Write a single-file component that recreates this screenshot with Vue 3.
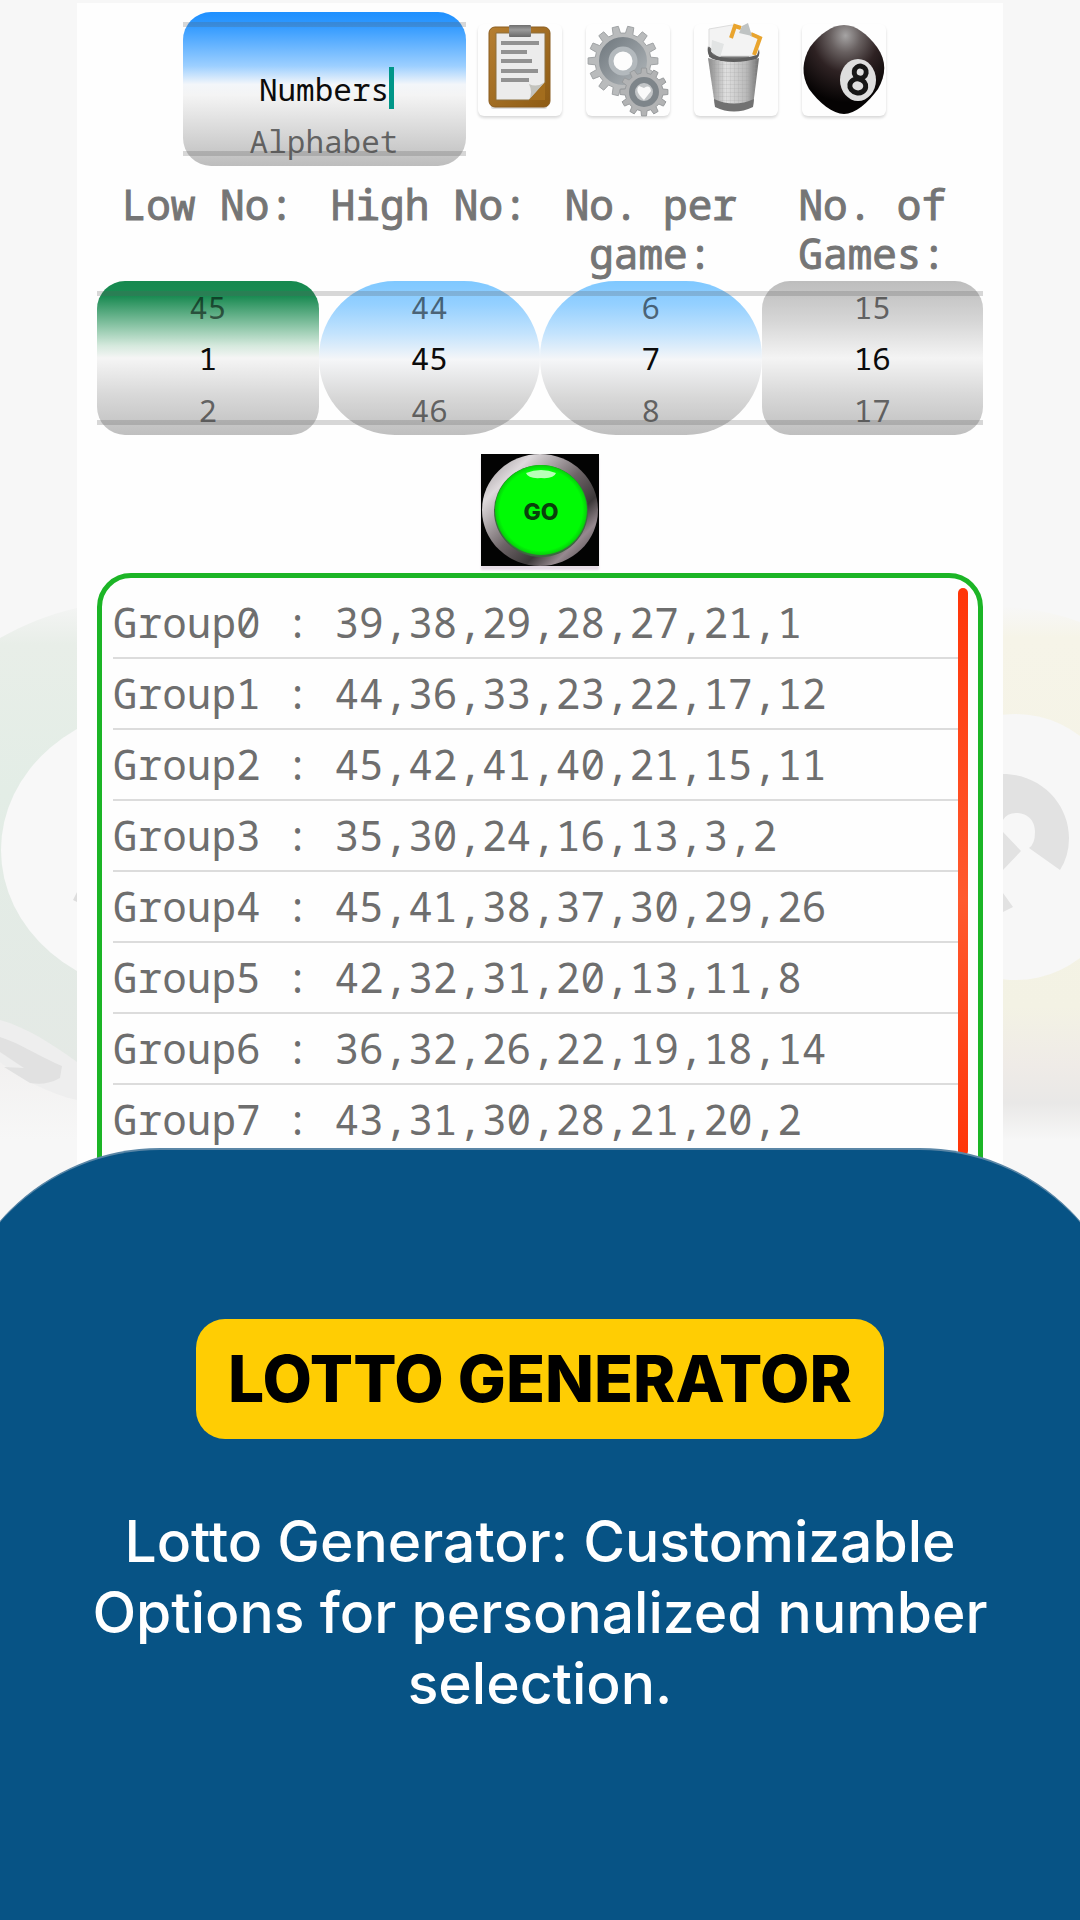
<script setup>
import { ref, computed } from 'vue';

const mode = ref('Numbers');

// One wheel per setting, with the values above and below the current one
const wheels = ref([
  { id: 'low', label: 'Low No:', value: 1, min: 1, max: 45, look: 'green' },
  { id: 'high', label: 'High No:', value: 45, min: 1, max: 99, look: 'blue' },
  { id: 'per-game', label: 'No. per game:', value: 7, min: 1, max: 20, look: 'blue' },
  { id: 'games', label: 'No. of Games:', value: 16, min: 1, max: 50, look: 'grey' },
]);

const previous = (wheel) => (wheel.value <= wheel.min ? wheel.max : wheel.value - 1);
const next = (wheel) => (wheel.value >= wheel.max ? wheel.min : Number(wheel.value) + 1);

const games = ref([
  [39, 38, 29, 28, 27, 21, 1],
  [44, 36, 33, 23, 22, 17, 12],
  [45, 42, 41, 40, 21, 15, 11],
  [35, 30, 24, 16, 13, 3, 2],
  [45, 41, 38, 37, 30, 29, 26],
  [42, 32, 31, 20, 13, 11, 8],
  [36, 32, 26, 22, 19, 18, 14],
  [43, 31, 30, 28, 21, 20, 2],
]);

const rows = computed(() => games.value.map((game, i) => `Group${i} : ${game.join(',')}`));

// Draw new games from the wheel settings
const generate = () => {
  const [low, high, perGame, count] = wheels.value.map((w) => Number(w.value));
  games.value = Array.from({ length: count }, () => {
    const pool = [];
    for (let n = low; n <= high; n++) pool.push(n);
    const picked = [];
    while (picked.length < perGame && pool.length) {
      picked.push(pool.splice(Math.floor(Math.random() * pool.length), 1)[0]);
    }
    return picked.sort((a, b) => b - a);
  });
};

const clearGames = () => {
  games.value = [];
};

// Gear outline: teeth around a circle
const gear = (cx, cy, outer, inner, teeth) => {
  const points = [];
  const step = (Math.PI * 2) / teeth;
  for (let i = 0; i < teeth; i++) {
    const a = i * step;
    [[-0.3, inner], [-0.2, outer], [0.2, outer], [0.3, inner]].forEach(([k, r]) => {
      points.push(`${(cx + Math.cos(a + k * step) * r).toFixed(1)},${(cy + Math.sin(a + k * step) * r).toFixed(1)}`);
    });
  }
  return points.join(' ');
};
</script>

<template>
  <div class="page">
    <svg class="ball left" viewBox="0 0 77 560" aria-hidden="true">
      <defs>
        <linearGradient id="greenBall" x1="0" y1="0" x2="0" y2="1">
          <stop offset="0" stop-color="#f3f4f3" />
          <stop offset="0.08" stop-color="#e8eee8" />
          <stop offset="0.4" stop-color="#e3ede6" />
          <stop offset="1" stop-color="#e4e9e5" />
        </linearGradient>
        <linearGradient id="floor" x1="0" y1="0" x2="0" y2="1">
          <stop offset="0" stop-color="#efedec" />
          <stop offset="1" stop-color="#f7f7f7" />
        </linearGradient>
      </defs>
      <path d="M0 440L77 480V560H0Z" fill="url(#floor)" />
      <path d="M0 58C25 44 50 34 77 28V488L0 444Z" fill="url(#greenBall)" />
      <ellipse cx="170" cy="270" rx="169" ry="145" fill="#f8f8f8" />
      <path d="M77 312L73 320L77 322Z" fill="#dddddd" />
      <path d="M0 440C28 448 52 464 77 482V520C50 514 22 500 0 482Z" fill="#eeeeee" />
      <path d="M0 457C22 464 42 478 62 486L60 498Q46 506 30 503L4 487L24 488L0 472Z" fill="#e1e1e1" />
    </svg>
    <svg class="ball right" viewBox="0 0 77 560" aria-hidden="true">
      <defs>
        <linearGradient id="yellowBall" x1="0" y1="0" x2="0" y2="1">
          <stop offset="0" stop-color="#f7f7f7" />
          <stop offset="0.06" stop-color="#f6f4e8" />
          <stop offset="0.75" stop-color="#f3f2e4" />
          <stop offset="0.86" stop-color="#efebe7" />
          <stop offset="0.93" stop-color="#e9e8e7" />
          <stop offset="1" stop-color="#f7f7f7" />
        </linearGradient>
      </defs>
      <path d="M0 26Q45 30 77 42V560H0Z" fill="url(#yellowBall)" />
      <ellipse cx="13" cy="267" rx="116" ry="133" fill="#f7f7f7" />
      <path d="M0 194C38 194 66 224 66 258Q66 276 57 290L26 268Q32 264 32 252C32 238 22 233 13 233Q4 233 0 240Z" fill="#e2e2e2" />
      <path d="M0 252L18 271L0 290ZM0 313L10 327L0 332Z" fill="#e2e2e2" />
    </svg>

    <main class="card">
      <header class="toolbar">
        <div class="wheel mode">
          <span></span>
          <input v-model="mode" type="text" aria-label="Mode">
          <i class="caret"></i>
          <button type="button" class="near" @click="mode = 'Alphabet'">Alphabet</button>
        </div>
        <div class="icons">
          <button type="button" class="icon" aria-label="Copy games">
            <svg viewBox="0 0 84 92">
              <defs>
                <linearGradient id="wood" x1="0" y1="0" x2="1" y2="1">
                  <stop offset="0" stop-color="#b67f31" />
                  <stop offset="1" stop-color="#8d5b14" />
                </linearGradient>
                <linearGradient id="clip" x1="0" y1="0" x2="0" y2="1">
                  <stop offset="0" stop-color="#6f6f6f" />
                  <stop offset="0.4" stop-color="#9b9b9b" />
                  <stop offset="1" stop-color="#6a6a6a" />
                </linearGradient>
              </defs>
              <rect x="13" y="80" width="56" height="5" rx="2" fill="#dedede" />
              <rect x="11" y="3" width="61" height="80" rx="6" fill="url(#wood)" stroke="#8a5c20" />
              <path d="M18 9H67V59L51 76H18Z" fill="#ececec" stroke="#8d713f" />
              <path d="M51 76Q55 68 51 60Q59 64 67 58Z" fill="#c3c3bd" />
              <path d="M67 58L51 76H67Z" fill="#a36d1d" />
              <rect x="31" y="1" width="22" height="12" rx="1" fill="url(#clip)" />
              <path d="M23 19H61M23 28H49M23 37H54M23 47H60M23 56H51" stroke="#929292" stroke-width="4" />
            </svg>
          </button>
          <button type="button" class="icon" aria-label="Settings">
            <svg viewBox="0 0 84 92">
              <defs>
                <linearGradient id="steel" x1="0" y1="0" x2="1" y2="1">
                  <stop offset="0" stop-color="#767e84" />
                  <stop offset="1" stop-color="#a9afb3" />
                </linearGradient>
              </defs>
              <polygon :points="gear(37, 37, 35, 28, 14)" fill="#b9bbbc" stroke="#a0a3a5" />
              <circle cx="37" cy="37" r="18" fill="none" stroke="url(#steel)" stroke-width="12" />
              <circle cx="37" cy="37" r="12" fill="#fdfdfd" stroke="#b3b9bd" stroke-width="5" />
              <polygon :points="gear(58, 68, 24, 19, 12)" fill="#b2b3b4" stroke="#989b9d" />
              <circle cx="58" cy="68" r="12" fill="#c3c6c8" stroke="#7e858a" stroke-width="6" />
              <path d="M58 76Q48 67 53 62L58 64Q64 60 65 67Z" fill="#fafafa" />
            </svg>
          </button>
          <button type="button" class="icon" aria-label="Delete games" @click="clearGames">
            <svg viewBox="0 0 84 92">
              <defs>
                <linearGradient id="bin" x1="0" y1="0" x2="1" y2="0">
                  <stop offset="0" stop-color="#898989" />
                  <stop offset="0.35" stop-color="#e0e0e0" />
                  <stop offset="0.75" stop-color="#bababa" />
                  <stop offset="1" stop-color="#6e6e6e" />
                </linearGradient>
                <pattern id="mesh" width="4" height="4" patternUnits="userSpaceOnUse">
                  <path d="M0 0H4M0 0V4" stroke="#999999" stroke-opacity="0.35" />
                </pattern>
              </defs>
              <path d="M15 23L53 25L56 35Q38 40 15 33Z" fill="#777777" />
              <path d="M15 5L38 1L65 12L61 32H25L15 22Z" fill="#f3f3f3" stroke="#dddddd" />
              <path d="M37 14L41 2L47 4" fill="none" stroke="#e9a42d" stroke-width="4" />
              <path d="M57 10L66 14L60 31" fill="none" stroke="#e9a42d" stroke-width="4" />
              <path d="M48 2L54 -1L58 12L45 9Z" fill="#bfc3c3" />
              <path d="M18 16L30 20L26 34L17 28Z" fill="#e2e4e4" />
              <path d="M14 22Q12 34 22 36Q40 41 60 36Q67 34 65 25L63 31Q40 38 19 31Z" fill="#5e5e5e" />
              <path d="M14 34Q40 42 65 34L59 82Q40 92 21 82Z" fill="url(#bin)" />
              <path d="M14 34Q40 42 65 34L59 79H20Z" fill="url(#mesh)" />
              <path d="M20 75Q40 84 60 75L59 83Q40 92 21 83Z" fill="#717171" />
            </svg>
          </button>
          <button type="button" class="icon" aria-label="Lucky draw">
            <svg viewBox="0 0 84 92">
              <defs>
                <radialGradient id="black" cx="0.52" cy="0.12" r="0.75">
                  <stop offset="0" stop-color="#a6a4a4" />
                  <stop offset="0.25" stop-color="#686060" />
                  <stop offset="0.55" stop-color="#2e2223" />
                  <stop offset="1" stop-color="#050303" />
                </radialGradient>
              </defs>
              <path d="M42 1C54 1 65 10 75 23C85 37 84 51 76 65C66 79 53 90 42 90C31 90 17 79 7 65C-1 51 0 37 8 23C18 10 30 1 42 1Z" fill="url(#black)" />
              <ellipse cx="56" cy="56" rx="18" ry="21" fill="#dedede" />
              <g fill="none" stroke="#161616" stroke-width="5" transform="rotate(10 57 55)">
                <ellipse cx="57" cy="48" rx="6" ry="6" />
                <ellipse cx="57" cy="62" rx="8" ry="7" />
              </g>
            </svg>
          </button>
        </div>
      </header>

      <div class="labels">
        <label v-for="wheel in wheels" :key="wheel.id" :for="wheel.id">{{ wheel.label }}</label>
      </div>
      <div class="wheels">
        <div v-for="wheel in wheels" :key="wheel.id" class="wheel" :class="wheel.look">
          <button type="button" class="near" @click="wheel.value = previous(wheel)">{{ previous(wheel) }}</button>
          <input :id="wheel.id" v-model="wheel.value" type="text" inputmode="numeric">
          <button type="button" class="near" @click="wheel.value = next(wheel)">{{ next(wheel) }}</button>
        </div>
      </div>

      <button type="button" class="go" aria-label="Go" @click="generate">
        <svg viewBox="0 0 118 112">
          <defs>
            <linearGradient id="chrome" x1="0" y1="0" x2="1" y2="1">
              <stop offset="0" stop-color="#8d8789" />
              <stop offset="0.22" stop-color="#ded9dc" />
              <stop offset="0.5" stop-color="#6d6467" />
              <stop offset="0.68" stop-color="#3c3839" />
              <stop offset="0.8" stop-color="#96898f" />
              <stop offset="1" stop-color="#2b2829" />
            </linearGradient>
            <radialGradient id="lamp">
              <stop offset="0.9" stop-color="#00fb05" />
              <stop offset="1" stop-color="#06cd0a" />
            </radialGradient>
          </defs>
          <rect width="118" height="112" fill="#030303" />
          <ellipse cx="59" cy="56" rx="58" ry="56" fill="url(#chrome)" />
          <ellipse cx="60" cy="57" rx="47" ry="46" fill="#3b6b3f" />
          <ellipse cx="60" cy="56" rx="46" ry="45" fill="url(#lamp)" />
          <path d="M45 19Q60 13 75 19Q73 25 60 24Q47 25 45 19Z" fill="#b7ffb8" />
          <text x="60" y="66" text-anchor="middle" class="go-text">GO</text>
        </svg>
      </button>

      <section class="results">
        <ul>
          <li v-for="row in rows" :key="row">{{ row }}</li>
        </ul>
        <div class="scrollbar"></div>
      </section>
    </main>

    <section class="promo">
      <h1>LOTTO GENERATOR</h1>
      <p>Lotto Generator: Customizable Options for personalized number selection.</p>
    </section>
  </div>
</template>

<style>
body {
  background: #075385;
}
</style>

<style scoped>
.page {
  position: relative;
  display: flex;
  flex-direction: column;
  min-height: 100vh;
  overflow: hidden;
  background: #f7f7f7;
  font-family: "Noto Sans Mono", "DejaVu Sans Mono", monospace;
}

button,
input {
  margin: 0;
  padding: 0;
  border: none;
  background: none;
  font: inherit;
  color: inherit;
  text-align: center;
}

button {
  cursor: pointer;
}

svg {
  display: block;
}

/* Faded lottery balls behind the card */
.ball {
  position: absolute;
  top: 580px;
  width: 77px;
  height: 560px;
}

.ball.left {
  left: 0;
}

.ball.right {
  right: 0;
}

.card {
  position: relative;
  display: flex;
  flex-direction: column;
  align-items: center;
  margin: 3px 77px 0;
  padding: 9px 20px 0;
  background: #fefefe;
}

.toolbar {
  display: flex;
}

.icons {
  display: flex;
  gap: 24px;
  padding: 12px 12px 0;
}

.icon {
  width: 84px;
  height: 92px;
  border-radius: 6px;
  box-shadow: 0 2px 3px #d8d8d8;
}

.icon svg {
  width: 84px;
  height: 92px;
  overflow: visible;
}

.wheel {
  position: relative;
  display: grid;
  grid-template-rows: 51px 52px 51px;
  height: 154px;
  border-radius: 28px;
  font-size: 31px;
  color: #0b0b0b;
}

.wheel input {
  width: 100%;
  outline: none;
}

.wheel .near {
  color: rgba(0, 0, 0, 0.54);
}

/* Top and bottom rails of the wheel */
.wheel::before,
.wheel::after {
  content: "";
  position: absolute;
  left: 0;
  right: 0;
  height: 5px;
  background: rgba(90, 90, 90, 0.24);
  pointer-events: none;
}

.wheel::before {
  top: 10px;
}

.wheel::after {
  bottom: 10px;
}

.mode {
  width: 283px;
  background: linear-gradient(#1e90ff 0%, #2e98ff 8%, #9ccfff 35%, #f3f6fa 47%, #f4f4f4 54%, #dadada 76%, #bdbdbd 100%);
}

.caret {
  position: absolute;
  top: 55px;
  left: calc(50% + 65px);
  width: 5px;
  height: 42px;
  background: #009688;
}

.green {
  background: linear-gradient(#16894f 0%, #1b8b53 10%, #9bcdb2 32%, #d5e9dd 42%, #f5f5f5 50%, #d8d8d8 74%, #bfbfbf 100%);
}

.blue {
  border-radius: 76px;
  background: linear-gradient(#7fc8ff 0%, #94d0ff 15%, #c3e3fd 34%, #f5f6f8 51%, #d8d8d8 75%, #bfbfbf 100%);
}

.grey {
  background: linear-gradient(#bdbdbd 0%, #d6d6d6 26%, #f4f4f4 50%, #d8d8d8 74%, #bfbfbf 100%);
}

.labels,
.wheels {
  display: grid;
  grid-template-columns: repeat(4, 1fr);
  width: 100%;
}

.labels {
  margin-top: 14px;
  padding-bottom: 3px;
  font-size: 41px;
  line-height: 49px;
  text-align: center;
  color: #757575;
  -webkit-text-stroke: 1px #757575;
}

.go {
  width: 118px;
  height: 112px;
  margin-top: 19px;
  box-shadow: 0 4px 2px #e6dce6;
}

.go-text {
  font-family: Inter, sans-serif;
  font-size: 23px;
  font-weight: 800;
  fill: #0a3f0c;
}

.results {
  display: flex;
  box-sizing: border-box;
  width: 100%;
  margin-top: 7px;
  padding: 10px 10px 96px 11px;
  border: 5px solid #1cb526;
  border-radius: 34px;
}

ul {
  flex: 1;
  margin: 0;
  padding: 0;
  list-style: none;
}

li {
  box-sizing: border-box;
  height: 71px;
  padding-top: 8px;
  border-bottom: 2px solid #dcdcdc;
  font-size: 41px;
  line-height: 52px;
  white-space: nowrap;
  color: #6e6e6e;
}

.scrollbar {
  width: 10px;
  border-radius: 5px;
  background: linear-gradient(#ff3508, #ff5a2e 55%, #ff3508);
}

.promo {
  position: relative;
  display: flex;
  flex: 1;
  flex-direction: column;
  align-items: center;
  margin: -109px -52px 0;
  padding: 169px 92px 100px;
  border-top: 2px solid #5a86a6;
  border-radius: 212px 212px 0 0;
  background: #075385;
  text-align: center;
}

h1 {
  margin: 0;
  padding: 0 32px;
  border-radius: 29px;
  background: #ffcd03;
  font-family: Inter, sans-serif;
  font-size: 64px;
  font-weight: 800;
  line-height: 120px;
  color: #000;
}

p {
  max-width: 980px;
  margin: 67px 0 0;
  font-family: Inter, sans-serif;
  font-size: 57px;
  font-weight: 500;
  line-height: 71px;
  color: #fff;
}
</style>
